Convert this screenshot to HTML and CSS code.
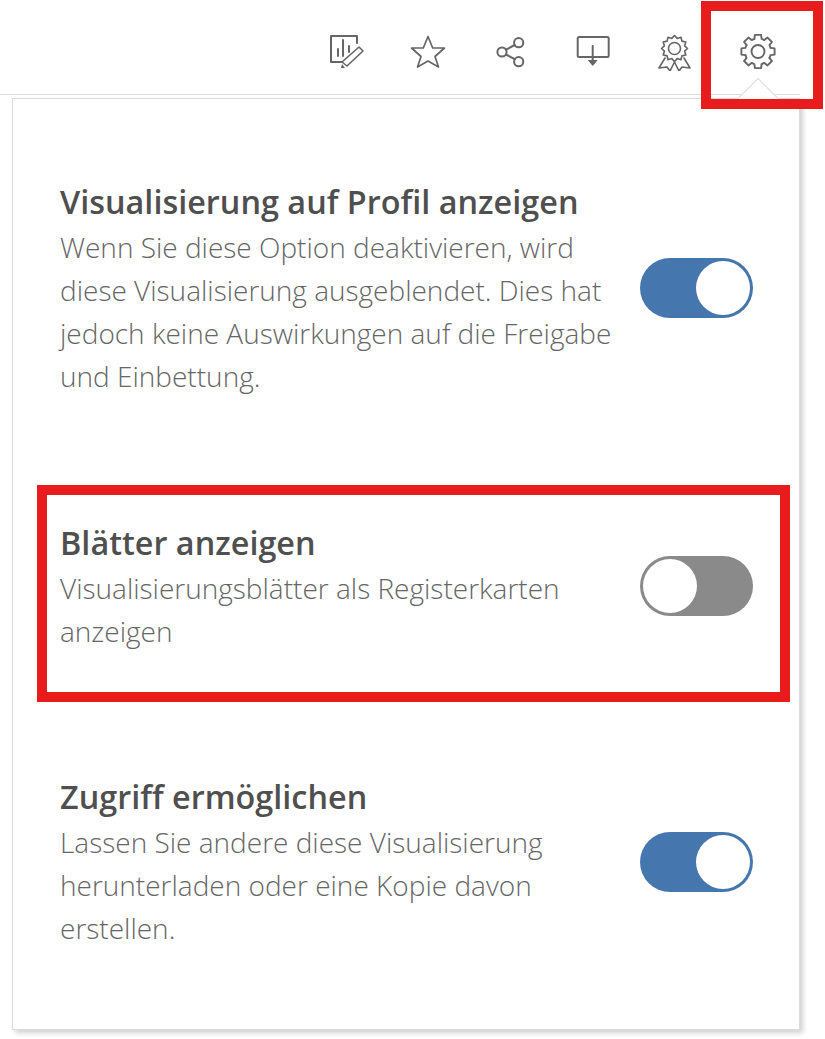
FILE: index.html
```html
<!DOCTYPE html>
<html lang="de">
<head>
<meta charset="utf-8">
<title>Einstellungen</title>
<link rel="stylesheet" href="styles.css">
</head>
<body>
<div class="app">
  <header class="toolbar">
    <div class="tool"><svg class="icon" viewBox="0 0 40 40"><path d="M16 31H5V5H31V12"/><path d="M12 18V25M17 9V25M23 15V21"/><path class="thin" d="M33 16L37 20L21 35L16 31Z"/><path class="solid" d="M16 33L19 37H15Z"/></svg></div>
    <div class="tool"><svg class="icon icon-star" viewBox="0 0 40 40"><polygon points="20,5.5 24.7,17 36.5,17 27,25.5 30.5,36 20,30 9.5,36 13,25.5 3.5,17 15.3,17"/></svg></div>
    <div class="tool"><svg class="icon" viewBox="0 0 40 40"><circle cx="27.7" cy="11.7" r="4.6"/><circle cx="11" cy="21" r="4.6"/><circle cx="27.7" cy="30.7" r="4.6"/><path d="M15 18.7L23.7 14M15 23.5L23.7 28.2"/></svg></div>
    <div class="tool"><svg class="icon" viewBox="0 0 40 40"><rect x="4.7" y="6" width="31" height="20" rx="1.5"/><path d="M19.7 15V30"/><path class="solid" d="M14.7 29H24.7L19.7 35Z"/></svg></div>
    <div class="tool"><svg class="icon icon-thin" viewBox="0 0 40 40"><polygon points="19.5,4.5 22.2,7.4 26,6.2 26.9,10.1 30.8,11 29.6,14.8 32.5,17.5 29.6,20.2 30.8,24 26.9,24.9 26,28.8 22.2,27.6 19.5,30.5 16.8,27.6 13,28.8 12.1,24.9 8.2,24 9.4,20.2 6.5,17.5 9.4,14.8 8.2,11 12.1,10.1 13,6.2 16.8,7.4"/><circle cx="19.5" cy="17.5" r="6"/><path d="M10 27L4 37L12 36L15 40L19.5 31L24 40L27 36L35 37L29 27"/></svg></div>
    <div class="tool"><svg class="icon icon-gear" viewBox="0 0 40 40"><defs><path id="gear-tooth" d="M-3.6,-12.6L-3.1,-16.6H3.1L3.6,-12.6A13,13 0 0 1 6.1,-11.5"/></defs><g transform="translate(20 20.5)"><use href="#gear-tooth"/><use href="#gear-tooth" transform="rotate(45)"/><use href="#gear-tooth" transform="rotate(90)"/><use href="#gear-tooth" transform="rotate(135)"/><use href="#gear-tooth" transform="rotate(180)"/><use href="#gear-tooth" transform="rotate(225)"/><use href="#gear-tooth" transform="rotate(270)"/><use href="#gear-tooth" transform="rotate(315)"/><circle r="6.5"/></g></svg></div>
  </header>
  <main class="panel">
    <span class="caret"></span>
    <section class="row">
      <div class="copy">
        <h2 class="title">Visualisierung auf Profil anzeigen</h2>
        <p class="desc">Wenn Sie diese Option deaktivieren, wird diese Visualisierung ausgeblendet. Dies hat jedoch keine Auswirkungen auf die Freigabe und Einbettung.</p>
      </div>
      <span class="toggle on"><span class="knob"></span></span>
    </section>
    <section class="row">
      <div class="copy">
        <h2 class="title">Blätter anzeigen</h2>
        <p class="desc">Visualisierungsblätter als Registerkarten anzeigen</p>
      </div>
      <span class="toggle off"><span class="knob"></span></span>
    </section>
    <section class="row">
      <div class="copy">
        <h2 class="title">Zugriff ermöglichen</h2>
        <p class="desc">Lassen Sie andere diese Visualisierung herunterladen oder eine Kopie davon erstellen.</p>
      </div>
      <span class="toggle on"><span class="knob"></span></span>
    </section>
  </main>
</div>
<div class="mark mark-gear"></div>
<div class="mark mark-row"></div>
</body>
</html>
```
FILE: styles.css
```css
html, body {
  margin: 0;
  padding: 0;
  background: #fff;
}
body {
  position: relative;
  width: 825px;
  height: 1039px;
  overflow: hidden;
  font-family: "Open Sans", "Liberation Sans", sans-serif;
}
.app {
  width: 800px;
}
.toolbar {
  display: flex;
  justify-content: flex-end;
  box-sizing: border-box;
  height: 95px;
  padding-top: 31px;
  padding-right: 1px;
  border-bottom: 1px solid #dcdcdc;
}
.tool {
  width: 82.4px;
  height: 40px;
  display: flex;
  justify-content: center;
}
.icon {
  display: block;
  width: 40px;
  height: 40px;
  fill: none;
  stroke: #666;
  stroke-width: 2;
  stroke-linejoin: round;
  stroke-linecap: round;
}
.icon-thin {
  stroke-width: 1.6;
}
.icon-star {
  stroke-width: 1.7;
}
.icon-gear {
  stroke-width: 1.9;
}
.icon .thin {
  stroke-width: 1.6;
}
.icon .solid {
  fill: #666;
  stroke: none;
}
.panel {
  position: relative;
  box-sizing: border-box;
  width: 788px;
  height: 932px;
  margin: 3px 0 0 12px;
  padding: 79px 46px 0 47px;
  border: 1px solid #dcdcdc;
  background: #fff;
  box-shadow: 3px 3px 5px rgba(0, 0, 0, 0.18);
}
.caret {
  position: absolute;
  left: 730px;
  top: -15px;
  width: 30px;
  height: 30px;
  background: #fff;
  border-top: 1px solid #dcdcdc;
  border-left: 1px solid #dcdcdc;
  box-sizing: border-box;
  transform: rotate(45deg);
}
.row {
  position: relative;
  display: flex;
  align-items: center;
  justify-content: space-between;
  margin-bottom: 120.5px;
}
.copy {
  width: 566px;
}
.title {
  margin: 0;
  font-size: 32.4px;
  line-height: 46px;
  font-weight: 600;
  color: #4f4f4f;
}
.desc {
  margin: 2px 0 0;
  font-size: 28px;
  line-height: 43px;
  font-weight: 300;
  color: #666;
}
.toggle {
  display: flex;
  box-sizing: border-box;
  width: 113px;
  height: 60px;
  padding: 3px;
  border-radius: 30px;
}
.toggle.on {
  background: #4577ae;
  justify-content: flex-end;
}
.toggle.off {
  background: #8a8a8a;
  justify-content: flex-start;
}
.knob {
  width: 54px;
  height: 54px;
  border-radius: 50%;
  background: #fff;
}
.mark {
  position: absolute;
  box-sizing: border-box;
  border: 10px solid #e81c1c;
}
.mark-gear {
  left: 701px;
  top: 1px;
  width: 122px;
  height: 108px;
}
.mark-row {
  left: 37px;
  top: 485px;
  width: 753px;
  height: 217px;
}
```
